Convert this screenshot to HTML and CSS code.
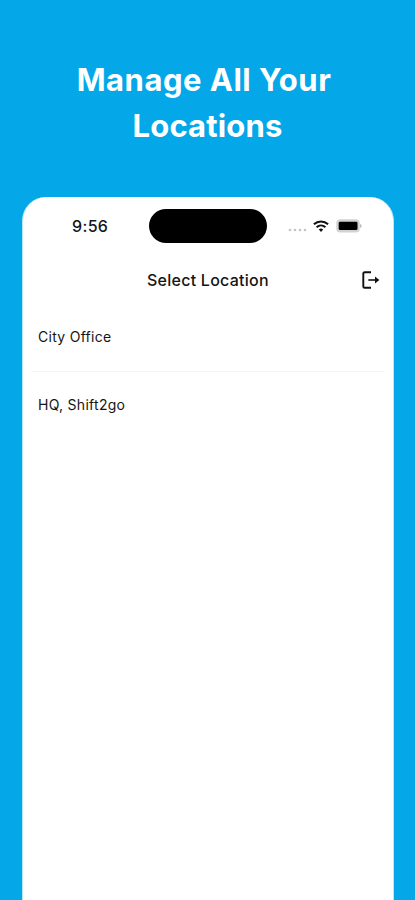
FILE: index.html
```html
<!DOCTYPE html>
<html lang="en">
<head>
<meta charset="utf-8">
<meta name="viewport" content="width=device-width, initial-scale=1">
<title>Select Location</title>
<link rel="stylesheet" href="styles.css">
</head>
<body>
<h1 class="headline"><span class="headline-first">Manage All Your</span><span class="headline-second">Locations</span></h1>
<main class="phone">
  <div class="status">
    <div class="time"><span>9:56</span></div>
    <div class="island"></div>
    <div class="indicators">
      <svg class="dots" width="19" height="4" viewBox="0 0 19 4" fill="#c4c4c4"><circle cx="2" cy="2" r="1.3"/><circle cx="7" cy="2" r="1.3"/><circle cx="12" cy="2" r="1.3"/><circle cx="17" cy="2" r="1.3"/></svg>
      <svg class="wifi" width="16" height="12" viewBox="0 0 16 12" fill="none" stroke="#111" stroke-width="2"><path d="M.9 4.3C5 .5 11 .5 15.1 4.3M3.6 7.3c2.6-2.4 6.2-2.4 8.8 0"/><path d="M8 11.9 5.8 9.5q2.2-1.8 4.4 0z" fill="#111" stroke="none"/></svg>
      <svg class="battery" width="26" height="14" viewBox="0 0 26 14"><rect x=".3" y=".3" width="23.4" height="13.2" rx="4" fill="#d2d2d2"/><rect x="2.7" y="2.7" width="18.8" height="8.4" rx="1.4" fill="#000"/><path d="M24.2 4.8q2.6 2.2 0 4.4z" fill="#aaa"/></svg>
    </div>
  </div>
  <header class="nav">
    <h2 class="title">Select Location</h2>
    <svg class="exit" width="18" height="18" viewBox="0 0 18 18"><path d="M9 1.2H2.7Q1.3 1.2 1.3 2.6v12.8q0 1.4 1.4 1.4H9" fill="none" stroke="#111" stroke-width="1.9"/><path d="M6.3 9H14" stroke="#111" stroke-width="1.6"/><path d="M13 5.4 17.4 9 13 12.6z" fill="#111"/></svg>
  </header>
  <ul class="locations">
    <li>City Office</li>
    <li>HQ, Shift2go</li>
  </ul>
</main>
</body>
</html>
```
FILE: styles.css
```css
* { box-sizing: border-box; }
body {
  margin: 0;
  height: 900px;
  overflow: hidden;
  display: flex;
  flex-direction: column;
  background: #04a8e8;
  color: #151515;
  font-family: Inter, "Liberation Sans", sans-serif;
}
.headline {
  height: 197px;
  flex: none;
  margin: 0;
  padding-top: 57px;
  display: flex;
  flex-direction: column;
  align-items: center;
  color: #fff;
  font-size: 31px;
  font-weight: 650;
  line-height: 46px;
}
.headline span { white-space: nowrap; }
.headline-first { letter-spacing: .5px; margin-right: 7px; }
.headline-second { letter-spacing: .15px; }
.phone {
  flex: 1;
  margin: 0 21px 0 22px;
  background: #fff;
  border-radius: 24px 24px 0 0;
  border: solid #b5e4f8;
  border-width: 0 1px;
}
.status {
  display: grid;
  grid-template-columns: 126px 118px 1fr;
  align-items: center;
  padding-top: 12px;
}
.time {
  padding-left: 49px;
  font-size: 16px;
  font-weight: 500;
  letter-spacing: .35px;
  line-height: 34px;
}
.island { height: 34px; border-radius: 17px; background: #000; }
.indicators { display: flex; align-items: center; padding-left: 21px; }
.dots { margin-top: 8px; }
.wifi { margin-left: 6px; margin-top: -1px; }
.battery { margin-left: 7px; }
.nav {
  display: grid;
  grid-template-columns: 1fr 18px;
  align-items: center;
  height: 74px;
  padding: 0 13px 0 124px;
}
.title {
  margin: 0;
  font-size: 16px;
  font-weight: 500;
  letter-spacing: .25px;
}
.locations {
  list-style: none;
  margin: 0 8px;
  padding: 0;
  font-size: 14px;
  letter-spacing: .28px;
}
.locations li {
  height: 68px;
  padding: 0 7px;
  line-height: 65px;
}
.locations li:first-child {
  height: 55px;
  line-height: 17px;
  padding-top: 11px;
  border-bottom: 1px solid #f4f4f4;
}
```
